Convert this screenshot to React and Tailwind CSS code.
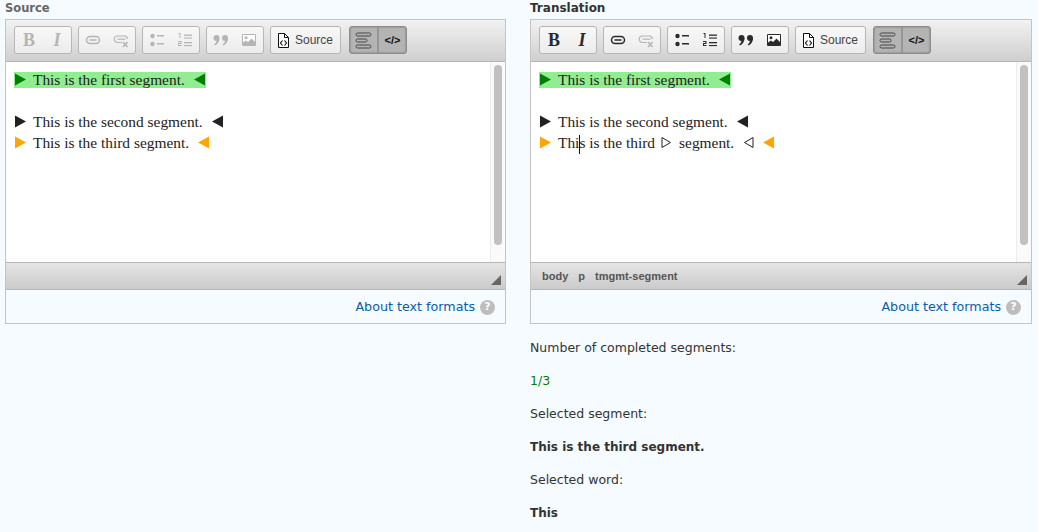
import React from 'react';

const ui = "font-['DejaVu_Sans',sans-serif]";

function Start({ color = '#222222', hollow = false }) {
    return (
        <svg width="11" height="13" viewBox="0 0 11 13" className="inline-block align-[-1px] mr-[7px]">
            {hollow
                ? <path d="M1 1.5 L9.5 6.5 L1 11.5 Z" fill="white" stroke={color} strokeWidth="1" />
                : <path d="M0 0.5 L11 6.5 L0 12.5 Z" fill={color} />}
        </svg>
    );
}

function End({ color = '#222222', hollow = false }) {
    return (
        <svg width="11" height="13" viewBox="0 0 11 13" className="inline-block align-[-1px] ml-[9px]">
            {hollow
                ? <path d="M10 1.5 L1.5 6.5 L10 11.5 Z" fill="white" stroke={color} strokeWidth="1" />
                : <path d="M11 0.5 L0 6.5 L11 12.5 Z" fill={color} />}
        </svg>
    );
}

function BoldIcon() {
    return <span className="font-['Liberation_Serif',serif] font-bold text-[18px] leading-none">B</span>;
}

function ItalicIcon() {
    return <span className="font-['Liberation_Serif',serif] font-bold italic text-[18px] leading-none">I</span>;
}

function LinkIcon() {
    return (
        <svg width="16" height="16" viewBox="0 0 16 16" fill="none" stroke="currentColor" strokeWidth="1.5">
            <rect x="1.5" y="4.5" width="13" height="7" rx="3.5" />
            <path d="M4.5 8h7" />
        </svg>
    );
}

function UnlinkIcon() {
    return (
        <svg width="16" height="16" viewBox="0 0 16 16" fill="none" stroke="currentColor" strokeWidth="1.2">
            <path d="M9 10.5H4.5a3.2 3.2 0 0 1 0-6.5h7a3.2 3.2 0 0 1 3 3" />
            <path d="M4.5 7.2h8" />
            <path d="M10 10l4.5 5M14.5 10L10 15" strokeWidth="1.6" />
        </svg>
    );
}

function BulletIcon() {
    return (
        <svg width="16" height="16" viewBox="0 0 16 16" fill="currentColor">
            <circle cx="3.5" cy="4" r="2.2" />
            <circle cx="3.5" cy="12" r="2.2" />
            <rect x="8" y="3" width="7" height="1.5" />
            <rect x="8" y="11" width="7" height="1.5" />
        </svg>
    );
}

function NumberIcon() {
    return (
        <svg width="16" height="16" viewBox="0 0 16 16" fill="currentColor">
            <path d="M1.5 1h2v5h-1V2h-1z" />
            <path d="M1 9h3.5v3H2v1h2.5v1H1v-3h2.5v-1H1z" />
            <rect x="7" y="2.5" width="8" height="1.3" />
            <rect x="7" y="5.5" width="8" height="1.1" />
            <rect x="7" y="10" width="8" height="1.3" />
            <rect x="7" y="13" width="8" height="1.1" />
        </svg>
    );
}

function QuoteIcon() {
    return (
        <svg width="16" height="16" viewBox="0 0 16 16" fill="currentColor">
            <circle cx="3.5" cy="6" r="3" />
            <path d="M6.5 6c0 3.5-1.6 6-4.5 7.5L1.2 12.5C2.8 11.3 3.5 10 3.5 8z" />
            <circle cx="12" cy="6" r="3" />
            <path d="M15 6c0 3.5-1.6 6-4.5 7.5l-.8-1C11.3 11.3 12 10 12 8z" />
        </svg>
    );
}

function ImageIcon() {
    return (
        <svg width="16" height="16" viewBox="0 0 16 16">
            <path d="M1.5 2.5h13v11h-13z" fill="#fff" stroke="currentColor" />
            <circle cx="5" cy="5.8" r="1.5" fill="currentColor" />
            <path d="M2 13v-2.5l3-2 2 1.5 3.5-3.5 3.5 3.5V13z" fill="currentColor" />
        </svg>
    );
}

function SourceIcon() {
    return (
        <svg width="11" height="15" viewBox="0 0 11 15" fill="none" stroke="#111111" className="shrink-0">
            <path d="M.5.5h6l4 4v10H.5z" fill="#fff" />
            <path d="M6.5.5v4h4" />
            <path d="M4.5 7.5l-2 2.5 2 2.5M6.5 7.5l2 2.5-2 2.5" strokeWidth="1.2" />
        </svg>
    );
}

function BlocksIcon() {
    return (
        <svg width="17" height="17" viewBox="0 0 17 17" fill="none" stroke="#444444" strokeWidth="1">
            <rect x="1" y="1" width="15" height="3" rx="1.5" />
            <rect x="1" y="7" width="11" height="3" rx="1.5" />
            <rect x="1" y="13" width="15" height="3" rx="1.5" />
        </svg>
    );
}

function ToolButton({ children, disabled }) {
    return (
        <span className={`w-[28px] h-full flex items-center justify-center ${disabled ? 'text-[#b5b5b5]' : 'text-[#2a2a2a]'}`}>
            {children}
        </span>
    );
}

function Group({ children }) {
    return (
        <div className="flex h-[28px] rounded-[3px] border border-[#b6b6b6] bg-[linear-gradient(#f8f8f8,#ececec)]">
            {children}
        </div>
    );
}

function Toolbar({ active }) {
    return (
        <div className="h-[42px] shrink-0 flex items-start gap-[6px] pl-[8px] pt-[6px] border-b border-[#b6b6b6] bg-[linear-gradient(#f2f2f2,#cfcfcf)]">
            <Group>
                <ToolButton disabled={!active}><BoldIcon /></ToolButton>
                <ToolButton disabled={!active}><ItalicIcon /></ToolButton>
            </Group>
            <Group>
                <ToolButton disabled={!active}><LinkIcon /></ToolButton>
                <ToolButton disabled><UnlinkIcon /></ToolButton>
            </Group>
            <Group>
                <ToolButton disabled={!active}><BulletIcon /></ToolButton>
                <ToolButton disabled={!active}><NumberIcon /></ToolButton>
            </Group>
            <Group>
                <ToolButton disabled={!active}><QuoteIcon /></ToolButton>
                <ToolButton disabled={!active}><ImageIcon /></ToolButton>
            </Group>
            <div className="flex h-[28px] w-[71px] items-center justify-center gap-[6px] rounded-[3px] border border-[#b6b6b6] bg-[linear-gradient(#f8f8f8,#ececec)] font-['Liberation_Sans',sans-serif] text-[12px] text-[#444444]">
                <SourceIcon />
                Source
            </div>
            <div className={`flex h-[28px] w-[58px] rounded-[3px] border border-[#8c8c8c] bg-[#b4b4b4] shadow-[inset_0_0_2px_#666666] ${active ? 'ml-[1px]' : 'ml-[2px]'}`}>
                <span className="w-[29px] flex items-center justify-center border-r-2 border-[#969696]"><BlocksIcon /></span>
                <span className="flex-1 flex items-center justify-center font-['Liberation_Sans',sans-serif] font-bold text-[11px] text-[#111111]">&lt;/&gt;</span>
            </div>
        </div>
    );
}

function Scrollbar() {
    return (
        <div className="w-[15px] shrink-0 border-l border-[#ececec] bg-[#fafafa] pt-[3px] pl-[3px]">
            <div className="w-[8px] h-[180px] rounded-[4px] bg-[#c1c1c1]" />
        </div>
    );
}

function StatusBar({ children }) {
    return (
        <div className="relative h-[28px] shrink-0 flex items-center gap-[10px] pl-[11px] border-t border-b border-[#b6b6b6] bg-[linear-gradient(#e4e4e4,#cbcbcb)] font-['Liberation_Sans',sans-serif] font-bold text-[11px] text-[#555555]">
            {children}
            <svg width="10" height="10" viewBox="0 0 10 10" className="absolute right-[4px] bottom-[4px]">
                <path d="M10 0V10H0Z" fill="#666666" />
            </svg>
        </div>
    );
}

function Editor({ active, children }) {
    return (
        <div className="h-[305px] flex flex-col border border-[#c4c4c4]">
            <Toolbar active={active} />
            <div className="h-[200px] flex bg-white">
                <div className="flex-1 pl-[9px] pt-[7px] font-['Liberation_Serif',serif] text-[15.4px] leading-[21px] text-[#222222] whitespace-nowrap">
                    {children}
                </div>
                <Scrollbar />
            </div>
            <StatusBar>
                {active && (
                    <>
                        <span>body</span>
                        <span>p</span>
                        <span>tmgmt-segment</span>
                    </>
                )}
            </StatusBar>
            <div className="flex-1 flex items-center justify-end gap-[5px] pr-[10px] pt-[1px] text-[12.7px] text-[#0b5cab]">
                <span>About text formats</span>
                <span className="w-[15px] h-[15px] rounded-full bg-[#bdbdbd] text-white text-[11px] font-bold flex items-center justify-center">?</span>
            </div>
        </div>
    );
}

function FirstSegment() {
    return (
        <p className="mb-[21px] h-[21px]">
            <span className="inline-block bg-[#90ee90] -ml-[1px] px-[1px] leading-[16px]">
                <Start color="#008000" />This is the first segment.<End color="#008000" />
            </span>
        </p>
    );
}

function SecondSegment() {
    return (
        <p>
            <Start />This is the second segment.<End />
        </p>
    );
}

export default function App() {
    return (
        <div className={`${ui} w-[1038px] h-[532px] overflow-hidden bg-[#f6fbff] text-[12.5px] text-[#333333] flex gap-[24px] pl-[5px]`}>
            <div className="w-[501px]">
                <h3 className="h-[19px] font-bold text-[11.5px] leading-[16px] text-[#666666]">Source</h3>
                <Editor>
                    <FirstSegment />
                    <SecondSegment />
                    <p>
                        <Start color="#ffa500" />This is the third segment.<End color="#ffa500" />
                    </p>
                </Editor>
            </div>
            <div className="w-[502px]">
                <h3 className="h-[19px] font-bold text-[12px] leading-[16px] text-[#333333]">Translation</h3>
                <Editor active>
                    <FirstSegment />
                    <SecondSegment />
                    <p>
                        <Start color="#ffa500" />
                        <span className="relative">
                            Thi
                            <span className="absolute top-[1px] h-[19px] w-px bg-[#111111]" />
                            s
                        </span>{' '}
                        is the third
                        <span className="ml-[6px]"><Start hollow /></span>
                        segment.
                        <End hollow />
                        <End color="#ffa500" />
                    </p>
                </Editor>
                <div className="pt-[14px] leading-[20px]">
                    <p className="mb-[13px]">Number of completed segments:</p>
                    <p className="mb-[13px] text-[#008000]">1/3</p>
                    <p className="mb-[13px]">Selected segment:</p>
                    <p className="mb-[13px] font-bold text-[12px]">This is the third segment.</p>
                    <p className="mb-[13px]">Selected word:</p>
                    <p className="font-bold text-[12px]">This</p>
                </div>
            </div>
        </div>
    );
}
